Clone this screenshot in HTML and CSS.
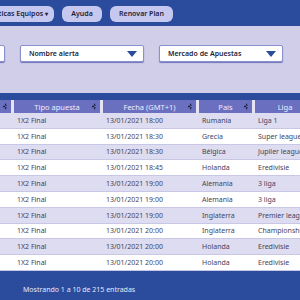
FILE: index.html
```html
<!DOCTYPE html>
<html>
<head>
    <title>Alertas</title>
    <link rel="stylesheet" href="styles.css">
</head>
<body>
    <div class="topbar">
        <button class="nav-btn first">Estadísticas Equipos <span class="caret">▾</span></button>
        <button class="nav-btn w-ayuda">Ayuda</button>
        <button class="nav-btn w-plan">Renovar Plan</button>
    </div>

    <div class="filters">
        <div class="select first-select"></div>
        <div class="select">
            <span>Nombre alerta</span>
            <svg width="10" height="6" viewBox="0 0 10 6"><path d="M0 0H10L5 6Z" fill="#2b4c9c"/></svg>
        </div>
        <div class="select">
            <span>Mercado de Apuestas</span>
            <svg width="10" height="6" viewBox="0 0 10 6"><path d="M0 0H10L5 6Z" fill="#2b4c9c"/></svg>
        </div>
    </div>

    <div class="table-wrap">
        <table class="alerts">
            <colgroup>
                <col class="w1"><col class="w2"><col class="w3"><col class="w4"><col class="w5">
            </colgroup>
            <thead>
                <tr>
                    <th><span class="sort"></span></th>
                    <th>Tipo apuesta <span class="sort"></span></th>
                    <th>Fecha (GMT+1) <span class="sort"></span></th>
                    <th>País <span class="sort"></span></th>
                    <th>Liga</th>
                </tr>
            </thead>
            <tbody>
                <tr><td></td><td>1X2 Final</td><td>13/01/2021 18:00</td><td>Rumanía</td><td>Liga 1</td></tr>
                <tr><td></td><td>1X2 Final</td><td>13/01/2021 18:30</td><td>Grecia</td><td>Super league</td></tr>
                <tr><td></td><td>1X2 Final</td><td>13/01/2021 18:30</td><td>Bélgica</td><td>Jupiler league</td></tr>
                <tr><td></td><td>1X2 Final</td><td>13/01/2021 18:45</td><td>Holanda</td><td>Eredivisie</td></tr>
                <tr><td></td><td>1X2 Final</td><td>13/01/2021 19:00</td><td>Alemania</td><td>3 liga</td></tr>
                <tr><td></td><td>1X2 Final</td><td>13/01/2021 19:00</td><td>Alemania</td><td>3 liga</td></tr>
                <tr><td></td><td>1X2 Final</td><td>13/01/2021 19:00</td><td>Inglaterra</td><td>Premier league</td></tr>
                <tr><td></td><td>1X2 Final</td><td>13/01/2021 20:00</td><td>Inglaterra</td><td>Championship</td></tr>
                <tr><td></td><td>1X2 Final</td><td>13/01/2021 20:00</td><td>Holanda</td><td>Eredivisie</td></tr>
                <tr><td></td><td>1X2 Final</td><td>13/01/2021 20:00</td><td>Holanda</td><td>Eredivisie</td></tr>
            </tbody>
        </table>
        <div class="info">Mostrando 1 a 10 de 215 entradas</div>
    </div>
</body>
</html>
```

FILE: styles.css
```css
body { margin: 0; width: 300px; height: 300px; overflow: hidden; font-family: "Noto Sans", sans-serif; background: #2b4c9c; }

.topbar { height: 26px; background: #2b4c9c; display: flex; align-items: center; gap: 8px; padding-top: 1px; box-sizing: border-box; }
.nav-btn { height: 16px; border: none; border-radius: 6px; background: #c6c8f0; color: #1d1d3a; font-family: inherit; font-size: 7px; font-weight: 600; padding: 0 8px; white-space: nowrap; }
.nav-btn.first { width: 100px; margin-left: -46px; text-align: right; padding-right: 6px; }
.caret { font-size: 6px; }
.w-ayuda { width: 40px; }
.w-plan { width: 63px; }

.filters { height: 67px; background: #d1cee9; display: flex; align-items: flex-start; gap: 15px; padding-top: 19px; box-sizing: border-box; }
.select { height: 17px; width: 124px; flex-shrink: 0; box-sizing: border-box; background: #fff; border: 1px solid #8a8fd0; border-radius: 2px; box-shadow: 0 1px 1px #6f74b8; display: flex; align-items: center; justify-content: space-between; padding: 0 6px 0 8px; font-size: 7px; font-weight: 600; color: #1d1d3a; }
.first-select { margin-left: -119px; }

.table-wrap { padding-top: 7px; }
.alerts { border-collapse: separate; border-spacing: 0; width: 315px; table-layout: fixed; font-size: 7px; color: #44445c; }
.w1 { width: 14px; }
.w2 { width: 89px; }
.w3 { width: 96px; }
.w4 { width: 56px; }
.w5 { width: 60px; }
.alerts th { height: 13px; padding: 0 5px; background: #6a6fc0; color: #eef; font-weight: 400; font-size: 7.5px; border-right: 3px solid #e6e4f4; text-align: center; position: relative; white-space: nowrap; }
.alerts th:last-child { border-right: none; }
.sort { position: absolute; right: 4px; top: 3px; width: 4px; height: 7px; background: #1d1d3a; clip-path: polygon(50% 0, 100% 40%, 0 40%, 0 60%, 100% 60%, 50% 100%); }
.alerts td { height: 14.8px; padding: 0 0 0 3px; border-bottom: 1px solid #c9c7e6; background: #fff; white-space: nowrap; overflow: hidden; }
.alerts tbody tr:nth-child(odd) td { background: #dddcf0; }

.info { padding-top: 13px; line-height: 12px; padding-left: 23px; color: #e6e8f8; font-size: 7px; }
```
